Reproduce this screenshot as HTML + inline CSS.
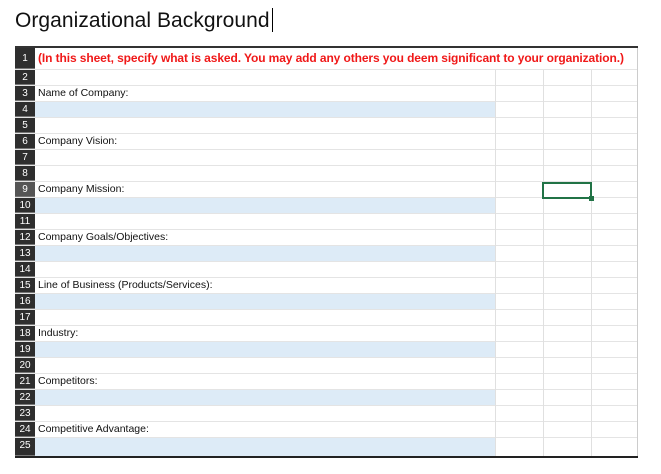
<!DOCTYPE html>
<html><head><style>
body{margin:0;width:661px;height:474px;background:#fff;position:relative;overflow:hidden;font-family:"Liberation Sans",Arial,sans-serif}
.title{position:absolute;left:15px;top:8px;font-size:21px;color:#111;letter-spacing:0.05px}
.cur{display:inline-block;width:1px;height:24px;background:#000;vertical-align:-5px;margin-left:2px}
.sheet{position:absolute;left:15px;top:46px;width:623px;height:408px;border-top:2px solid #333;border-bottom:2px solid #222}
.row{position:absolute;left:0;width:623px;height:16px;border-bottom:1px solid #e4e4e4;box-sizing:border-box}
.hd{position:absolute;left:0;top:0;width:20px;height:100%;background:#2e2e2e;color:#fff;font-size:10px;text-align:center;line-height:15px;border-bottom:1px solid #777;box-sizing:border-box}
.a{position:absolute;left:20px;top:0;width:460px;height:100%;font-size:10.5px;line-height:15px;padding-left:3px;box-sizing:border-box;color:#111;white-space:nowrap}
.blue{background:#ddebf7}
.vl{position:absolute;top:0;width:1px;height:100%;background:#e0e0e0}
.red{color:#f01818;font-weight:bold;font-size:12px;line-height:21px;white-space:nowrap;width:620px;letter-spacing:-0.1px}
.sel{position:absolute;left:527px;top:134px;width:50px;height:17px;border:2px solid #217346;box-sizing:border-box}
.sel:after{content:"";position:absolute;right:-4px;bottom:-4px;width:5px;height:5px;background:#217346}
</style></head><body>
<div class="title">Organizational Background<span class="cur"></span></div>
<div class="sheet">
<div class="row" style="top:0;height:22px"><div class="hd" style="line-height:21px">1</div><div class="a red">(In this sheet, specify what is asked. You may add any others you deem significant to your organization.)</div></div>
<div class="row" style="top:22px"><div class="hd">2</div><div class="a"></div></div>
<div class="row" style="top:38px"><div class="hd">3</div><div class="a">Name of Company:</div></div>
<div class="row" style="top:54px"><div class="hd">4</div><div class="a blue"></div></div>
<div class="row" style="top:70px"><div class="hd">5</div><div class="a"></div></div>
<div class="row" style="top:86px"><div class="hd">6</div><div class="a">Company Vision:</div></div>
<div class="row" style="top:102px"><div class="hd">7</div><div class="a"></div></div>
<div class="row" style="top:118px"><div class="hd">8</div><div class="a"></div></div>
<div class="row" style="top:134px"><div class="hd" style="background:#555">9</div><div class="a">Company Mission:</div></div>
<div class="row" style="top:150px"><div class="hd">10</div><div class="a blue"></div></div>
<div class="row" style="top:166px"><div class="hd">11</div><div class="a"></div></div>
<div class="row" style="top:182px"><div class="hd">12</div><div class="a">Company Goals/Objectives:</div></div>
<div class="row" style="top:198px"><div class="hd">13</div><div class="a blue"></div></div>
<div class="row" style="top:214px"><div class="hd">14</div><div class="a"></div></div>
<div class="row" style="top:230px"><div class="hd">15</div><div class="a">Line of Business (Products/Services):</div></div>
<div class="row" style="top:246px"><div class="hd">16</div><div class="a blue"></div></div>
<div class="row" style="top:262px"><div class="hd">17</div><div class="a"></div></div>
<div class="row" style="top:278px"><div class="hd">18</div><div class="a">Industry:</div></div>
<div class="row" style="top:294px"><div class="hd">19</div><div class="a blue"></div></div>
<div class="row" style="top:310px"><div class="hd">20</div><div class="a"></div></div>
<div class="row" style="top:326px"><div class="hd">21</div><div class="a">Competitors:</div></div>
<div class="row" style="top:342px"><div class="hd">22</div><div class="a blue"></div></div>
<div class="row" style="top:358px"><div class="hd">23</div><div class="a"></div></div>
<div class="row" style="top:374px"><div class="hd">24</div><div class="a">Competitive Advantage:</div></div>
<div class="row" style="top:390px;border-bottom:none;height:18px"><div class="hd">25</div><div class="a blue"></div></div>
<div class="vl" style="left:480px;top:22px;height:386px"></div>
<div class="vl" style="left:528px;top:22px;height:386px"></div>
<div class="vl" style="left:576px;top:22px;height:386px"></div>
<div class="vl" style="left:622px;background:#ccc"></div>
<div class="sel"></div>
</div>
</body></html>
